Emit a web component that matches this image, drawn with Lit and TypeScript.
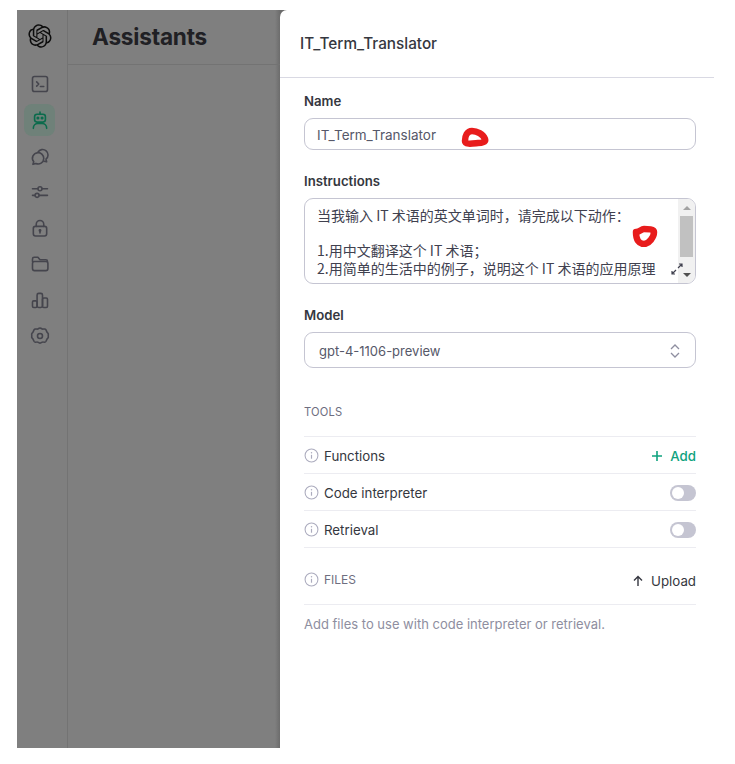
import { LitElement, html, css, svg } from "lit";
import { customElement } from "lit/decorators.js";

const logoPath = "M37.5324 16.8707C37.9808 15.5241 38.1363 14.0974 37.9886 12.6859C37.8409 11.2744 37.3934 9.91076 36.676 8.68622C35.6126 6.83404 33.9882 5.3676 32.0373 4.4985C30.0864 3.62941 27.9098 3.40259 25.8215 3.85078C24.8796 2.7893 23.7219 1.94125 22.4257 1.36341C21.1295 0.785575 19.7249 0.491269 18.3058 0.500197C16.1708 0.495044 14.0893 1.16803 12.3614 2.42214C10.6335 3.67624 9.34853 5.44666 8.6917 7.47815C7.30085 7.76286 5.98686 8.3414 4.8377 9.17505C3.68854 10.0087 2.73073 11.0782 2.02839 12.312C0.956464 14.1591 0.498905 16.2988 0.721698 18.4228C0.944492 20.5467 1.83612 22.5449 3.268 24.1293C2.81966 25.4759 2.66413 26.9026 2.81182 28.3141C2.95951 29.7256 3.40701 31.0892 4.12437 32.3138C5.18791 34.1659 6.8123 35.6322 8.76321 36.5013C10.7141 37.3704 12.8907 37.5973 14.9789 37.1492C15.9208 38.2107 17.0786 39.0587 18.3747 39.6366C19.6709 40.2144 21.0755 40.5087 22.4946 40.4998C24.6307 40.5054 26.7133 39.8321 28.4418 38.5772C30.1704 37.3223 31.4556 35.5506 32.1119 33.5179C33.5027 33.2332 34.8167 32.6547 35.9659 31.821C37.115 30.9874 38.0728 29.9178 38.7752 28.684C39.8458 26.8371 40.3023 24.6979 40.0789 22.5748C39.8556 20.4517 38.9639 18.4544 37.5324 16.8707ZM22.4978 37.8849C20.7443 37.8874 19.0459 37.2733 17.6994 36.1501C17.7601 36.117 17.8666 36.0586 17.936 36.0161L25.9004 31.4156C26.1003 31.3019 26.2663 31.137 26.3813 30.9378C26.4964 30.7386 26.5563 30.5124 26.5549 30.2825V19.0542L29.9213 20.998C29.9389 21.0068 29.9541 21.0198 29.9656 21.0359C29.977 21.052 29.9842 21.0707 29.9867 21.0902V30.3889C29.9842 32.375 29.1946 34.2791 27.7909 35.6841C26.3872 37.0892 24.4838 37.8806 22.4978 37.8849ZM6.39227 31.0064C5.51397 29.4888 5.19742 27.7107 5.49804 25.9832C5.55718 26.0187 5.66048 26.0818 5.73461 26.1244L13.699 30.7248C13.8975 30.8408 14.1233 30.902 14.3532 30.902C14.583 30.902 14.8088 30.8408 15.0073 30.7248L24.731 25.1103V28.9979C24.7321 29.0177 24.7283 29.0376 24.7199 29.0556C24.7115 29.0736 24.6988 29.0893 24.6829 29.1012L16.6317 33.7497C14.9096 34.7416 12.8643 35.0097 10.9447 34.4954C9.02506 33.9811 7.38785 32.7263 6.39227 31.0064ZM4.29707 13.6194C5.17156 12.0998 6.55279 10.9364 8.19885 10.3327C8.19885 10.4013 8.19491 10.5228 8.19491 10.6071V19.808C8.19351 20.0378 8.25334 20.2638 8.36823 20.4629C8.48312 20.6619 8.64893 20.8267 8.84863 20.9404L18.5723 26.5542L15.206 28.4979C15.1894 28.5089 15.1703 28.5155 15.1505 28.5173C15.1307 28.5191 15.1107 28.516 15.0924 28.5082L7.04046 23.8557C5.32135 22.8601 4.06716 21.2235 3.55289 19.3046C3.03862 17.3858 3.30624 15.3413 4.29707 13.6194ZM31.955 20.0556L22.2312 14.4411L25.5976 12.4981C25.6142 12.4872 25.6333 12.4805 25.6531 12.4787C25.6729 12.4769 25.6928 12.4801 25.7111 12.4879L33.7631 17.1364C34.9967 17.849 36.0017 18.8982 36.6606 20.1613C37.3194 21.4244 37.6047 22.849 37.4832 24.2684C37.3617 25.6878 36.8382 27.0432 35.9743 28.1759C35.1103 29.3086 33.9415 30.1717 32.6047 30.6641C32.6047 30.5947 32.6047 30.4733 32.6047 30.3889V21.188C32.6066 20.9586 32.5474 20.7328 32.4332 20.5338C32.319 20.3348 32.154 20.1698 31.955 20.0556ZM35.3055 15.0128C35.2464 14.9765 35.1431 14.9142 35.069 14.8717L27.1045 10.2712C26.906 10.1554 26.6803 10.0943 26.4504 10.0943C26.2206 10.0943 25.9948 10.1554 25.7963 10.2712L16.0726 15.8858V11.9982C16.0715 11.9783 16.0753 11.9585 16.0837 11.9405C16.0921 11.9225 16.1048 11.9068 16.1207 11.8949L24.1719 7.25025C25.4053 6.53903 26.8158 6.19376 28.2383 6.25482C29.6608 6.31589 31.0364 6.78077 32.2044 7.59508C33.3723 8.40939 34.2842 9.53945 34.8334 10.8531C35.3826 12.1667 35.5464 13.6095 35.3055 15.0128ZM14.2424 21.9419L10.8752 19.9981C10.8576 19.9893 10.8423 19.9763 10.8309 19.9602C10.8195 19.9441 10.8122 19.9254 10.8098 19.9058V10.6071C10.8107 9.18295 11.2173 7.78848 11.9819 6.58696C12.7466 5.38544 13.8377 4.42659 15.1275 3.82264C16.4173 3.21869 17.8524 2.99464 19.2649 3.1767C20.6775 3.35876 22.0089 3.93941 23.1034 4.85067C23.0427 4.88379 22.937 4.94215 22.8668 4.98473L14.9024 9.58517C14.7025 9.69878 14.5366 9.86356 14.4215 10.0626C14.3065 10.2616 14.2466 10.4877 14.2479 10.7175L14.2424 21.9419ZM16.071 17.9991L20.4018 15.4978L24.7325 17.9975V22.9985L20.4018 25.4983L16.071 22.9985V17.9991Z";

const navIcons = [
  svg`<rect x="3" y="3" width="18" height="18" rx="2.5"/><path d="M8 9.5l2.500 2.500L8 14.500M12.500 15h4"/>`,
  svg`<path d="M12 2.500v2.500"/><rect x="5.500" y="5" width="13" height="9.500" rx="3"/><path d="M4 22c0-3.500 2.500-6 5.500-6h5c3 0 5.500 2.500 5.500 6"/><circle cx="9.500" cy="9.500" r=".9" fill="currentColor"/><circle cx="14.500" cy="9.500" r=".9" fill="currentColor"/>`,
  svg`<path d="M9.500 7.500a6.500 6.500 0 1 1 9.700 8.300l.8 3.200-3.200-.8"/><path d="M9.500 8a6.700 6.700 0 0 0-5 11l-1 3 3.500-1a6.700 6.700 0 0 0 9.500-6A6.800 6.800 0 0 0 9.500 8z"/>`,
  svg`<path d="M3 8h6.500M14.500 8H21M3 16h3M11 16h10"/><circle cx="12" cy="8" r="2.400"/><circle cx="8.500" cy="16" r="2.400"/>`,
  svg`<path d="M7.500 10V7.500a4.500 4.500 0 0 1 9 0V10"/><rect x="4" y="10" width="16" height="11.500" rx="2.500"/><circle cx="12" cy="15" r=".8" fill="currentColor"/><path d="M12 15v3"/>`,
  svg`<path d="M3 9V6a2 2 0 0 1 2-2h4.500l2.500 3h7a2 2 0 0 1 2 2"/><rect x="3" y="9" width="18.500" height="11" rx="2.500"/>`,
  svg`<rect x="3" y="13" width="5.500" height="8" rx="1.500"/><rect x="8.500" y="4" width="6.500" height="17" rx="2"/><rect x="15" y="9.500" width="6" height="11.500" rx="1.500"/>`,
  svg`<path d="M10 3.300l1-.6a2 2 0 0 1 2 0l1 .6a3 3 0 0 0 2 .4l1.300-.1a2 2 0 0 1 1.900 1.100l.9 2a3 3 0 0 0 1 1.500l.5.500a2 2 0 0 1 .3 2v1.600a2 2 0 0 1-.3 2l-.5.500a3 3 0 0 0-1 1.500l-.9 2a2 2 0 0 1-1.900 1.100l-1.300-.1a3 3 0 0 0-2 .4l-1 .6a2 2 0 0 1-2 0l-1-.6a3 3 0 0 0-2-.4l-1.300.1a2 2 0 0 1-1.900-1.100l-.9-2a3 3 0 0 0-1-1.500l-.5-.5a2 2 0 0 1-.3-2v-1.600a2 2 0 0 1 .3-2l.5-.5a3 3 0 0 0 1-1.500l.9-2a2 2 0 0 1 1.900-1.100l1.300.1a3 3 0 0 0 2-.4z"/><circle cx="12" cy="12" r="3"/>`,
];

const info = html`<svg class="info" viewBox="0 0 14 14"><circle cx="7" cy="7" r="6" fill="none" stroke="currentColor" stroke-width="1"/><path d="M7 6.400v3.600" stroke="currentColor" stroke-width="1.100"/><circle cx="7" cy="4.400" r=".7" fill="currentColor"/></svg>`;

@customElement("app-root")
export class AppRoot extends LitElement {
  static styles = css`
    :host {
      display: block;
      width: 735px;
      height: 764px;
      background: #fff;
      overflow: hidden;
      font-family: Inter, "Noto Sans CJK SC", sans-serif;
      color: #353740;
    }
    .page {
      display: flex;
      align-items: stretch;
      height: 738px;
      padding: 10px 0 16px 17px;
    }
    .backdrop {
      flex: none;
      display: flex;
      width: 270px;
      background: linear-gradient(to right, #7f7f7f 258px, #6c6c6c 263px, #6c6c6c 270px);
    }
    .side {
      flex: none;
      border-right: 1px solid #737373;
      display: flex;
      flex-direction: column;
      align-items: flex-start;
      padding-left: 7px;
      box-sizing: border-box;
      width: 51px;
    }
    .logo { width: 24px; height: 24px; margin: 14px 0 20px 4px; color: #0d0d0d; display: block; }
    .nav {
      width: 31px;
      height: 32px;
      margin-bottom: 4px;
      border-radius: 8px;
      display: flex;
      align-items: center;
      justify-content: center;
      color: #45454d;
    }
    .nav svg { width: 20px; height: 20px; fill: none; stroke: currentColor; stroke-width: 1.900; stroke-linecap: round; stroke-linejoin: round; }
    .nav.active { background: #6f8179; color: #0b6b4c; }
    .main { flex: 1; min-width: 0; }
    .main-head {
      height: 54px;
      border-bottom: 1px solid #737373;
      padding-left: 24px;
      font-size: 22.600px;
      font-weight: 700;
      line-height: 54px;
      color: #202024;
      letter-spacing: -0.200px;
    }
    .sheet {
      position: relative;
      z-index: 1;
      flex: 1;
      min-width: 0;
      margin-left: -7px;
      background: #fff;
      border-top-left-radius: 7px;
    }
    .sheet-head {
      width: 434px;
      box-sizing: border-box;
      height: 68px;
      border-bottom: 1px solid #d9d9e3;
      padding-left: 20px;
      font-size: 15.300px;
      font-weight: 500;
      line-height: 67px;
      color: #353740;
    }
    .form { width: 392px; padding-left: 24px; }
    .label { font-size: 13.200px; font-weight: 600; line-height: 16px; color: #353740; }
    .first { margin-top: 15px; }
    .field {
      box-sizing: border-box;
      border: 1px solid #c5c5d2;
      border-radius: 9px;
      font-size: 13px;
      color: #565869;
      display: flex;
      align-items: center;
    }
    .name { height: 32px; margin-top: 9px; padding: 1px 0 0 12px; font-size: 13.500px; }
    .l2 { margin-top: 23px; }
    .ta {
      position: relative;
      height: 86px;
      margin-top: 9px;
      align-items: stretch;
      overflow: hidden;
    }
    .ta-text {
      flex: 1;
      padding: 8px 0 0 12px;
      font-family: "Noto Sans CJK SC", sans-serif;
      font-size: 14px;
      line-height: 17.700px;
      color: #40414f;
      white-space: nowrap;
    }
    .scroll { flex: none; width: 17px; background: #f1f1f1; display: flex; flex-direction: column; align-items: center; }
    .arrow { flex: none; height: 17px; display: flex; align-items: center; justify-content: center; }
    .thumb { flex: none; width: 13px; height: 41px; background: #c1c1c1; }
    .track { flex: 1; }
    .tri-up { width: 0; height: 0; border: 4px solid transparent; border-top: 0; border-bottom: 4px solid #a3a3a3; }
    .tri-dn { width: 0; height: 0; border: 4px solid transparent; border-bottom: 0; border-top: 4px solid #505050; }
    .expand { position: absolute; right: 12px; bottom: 8px; width: 12px; height: 12px; color: #40414f; }
    .l3 { margin-top: 23px; }
    .select { height: 36px; margin-top: 9px; padding: 1px 13px 0 14px; justify-content: space-between; }
    .select svg { width: 14px; height: 18px; fill: none; stroke: #8e8ea0; stroke-width: 1.300; }
    .section { font-size: 11.200px; line-height: 14px; letter-spacing: 0.200px; color: #6e6e80; }
    .tools { margin-top: 37px; padding-bottom: 17px; border-bottom: 1px solid #ececf1; }
    .row {
      box-sizing: border-box;
      height: 37px;
      padding-top: 1px;
      border-bottom: 1px solid #ececf1;
      display: flex;
      align-items: center;
      justify-content: space-between;
      font-size: 13.300px;
      color: #353740;
    }
    .row-l { display: flex; align-items: center; gap: 5px; }
    .info { width: 15px; height: 15px; color: #acacbe; flex: none; }
    .add { display: flex; align-items: center; gap: 7px; color: #10a37f; font-weight: 500; }
    .add svg { width: 12px; height: 12px; stroke: currentColor; stroke-width: 1.600; fill: none; }
    .toggle { width: 26px; height: 16px; border-radius: 8px; background: #c5c5d2; display: flex; align-items: center; padding-left: 2px; box-sizing: border-box; }
    .knob { width: 12px; height: 12px; border-radius: 50%; background: #fff; }
    .files {
      box-sizing: border-box;
      height: 57px;
      padding-top: 9px;
      border-bottom: 1px solid #ececf1;
      display: flex;
      align-items: center;
      justify-content: space-between;
    }
    .files .section { font-size: 12px; letter-spacing: 0; margin-bottom: 2px; }
    .upload { display: flex; align-items: center; gap: 7px; font-size: 13.300px; color: #353740; }
    .upload svg { width: 12px; height: 12px; stroke: currentColor; stroke-width: 1.400; fill: none; }
    .hint { margin-top: 11px; font-size: 13px; line-height: 17px; color: #8e8ea0; }
    .scribble { position: absolute; z-index: 2; fill: none; stroke: #e81c1c; stroke-width: 6.500; stroke-linejoin: round; }
    .s1 { left: 461px; top: 127px; width: 28px; height: 20px; }
    .s2 { left: 632px; top: 225px; width: 26px; height: 22px; }
  `;

  render() {
    return html`
      <div class="page">
        <div class="backdrop">
          <div class="side">
            <svg class="logo" viewBox="0 0 41 41"><path fill="currentColor" d=${logoPath}></path></svg>
            ${navIcons.map(
              (ic, i) => html`<div class="nav ${i === 1 ? "active" : ""}"><svg viewBox="0 0 24 24">${ic}</svg></div>`
            )}
          </div>
          <div class="main"><div class="main-head">Assistants</div></div>
        </div>
        <div class="sheet">
          <div class="sheet-head">IT_Term_Translator</div>
          <div class="form">
            <div class="label first">Name</div>
            <div class="field name">IT_Term_Translator</div>
            <div class="label l2">Instructions</div>
            <div class="field ta">
              <div class="ta-text">当我输入 IT 术语的英文单词时，请完成以下动作：<br /><br />1.用中文翻译这个 IT 术语；<br />2.用简单的生活中的例子，说明这个 IT 术语的应用原理</div>
              <div class="scroll">
                <div class="arrow"><div class="tri-up"></div></div>
                <div class="thumb"></div>
                <div class="track"></div>
                <div class="arrow"><div class="tri-dn"></div></div>
              </div>
              <svg class="expand" viewBox="0 0 12 12" fill="none" stroke="currentColor" stroke-width="1.200"><path d="M7 5l4-4M8 1h3v3M5 7l-4 4M1 8v3h3"></path></svg>
            </div>
            <div class="label l3">Model</div>
            <div class="field select">
              <span>gpt-4-1106-preview</span>
              <svg viewBox="0 0 14 18"><path d="M3 7l4-4 4 4M3 11l4 4 4-4"></path></svg>
            </div>
            <div class="section tools">TOOLS</div>
            <div class="row">
              <div class="row-l">${info}Functions</div>
              <div class="add"><svg viewBox="0 0 12 12"><path d="M6 1v10M1 6h10"></path></svg>Add</div>
            </div>
            <div class="row">
              <div class="row-l">${info}Code interpreter</div>
              <div class="toggle"><div class="knob"></div></div>
            </div>
            <div class="row">
              <div class="row-l">${info}Retrieval</div>
              <div class="toggle"><div class="knob"></div></div>
            </div>
            <div class="files">
              <div class="row-l section">${info}FILES</div>
              <div class="upload"><svg viewBox="0 0 12 12"><path d="M6 11V1.500M2 5.500l4-4 4 4"></path></svg>Upload</div>
            </div>
            <div class="hint">Add files to use with code interpreter or retrieval.</div>
          </div>
        </div>
        <svg class="scribble s1" viewBox="0 0 28 20"><path d="M4 14c0-5 2-10 7-10 5 0 11 3 13 8 1 3-3 4-7 4-5 .500-13 2-13-2z"></path></svg>
        <svg class="scribble s2" viewBox="0 0 26 22"><path d="M4 7c4 0 5-3 8-3 4 0 10 0 10 3 0 5-5 12-10 12-5 0-8-4-8-12z"></path></svg>
      </div>
    `;
  }
}
